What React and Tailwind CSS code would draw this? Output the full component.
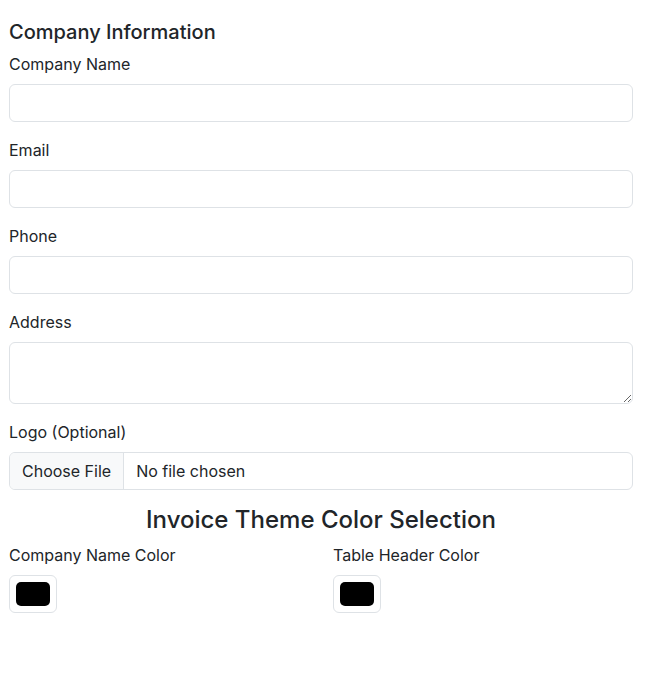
export default function App() {
  const field = 'block w-full h-[38px] rounded-[6px] border border-[#dee2e6] bg-white px-3 py-1.5 text-base outline-none';
  return (
    <div className="min-h-screen bg-white font-['Inter',sans-serif] text-[#212529]">
      <div className="w-[624px] ml-[9px] pt-[20px]">
        <h5 className="mb-2 text-[20px] font-medium leading-[1.2]">Company Information</h5>

        <div className="mb-4">
          <label className="mb-2 block text-base leading-6">Company Name</label>
          <input type="text" className={field} />
        </div>
        <div className="mb-4">
          <label className="mb-2 block text-base leading-6">Email</label>
          <input type="email" className={field} />
        </div>
        <div className="mb-4">
          <label className="mb-2 block text-base leading-6">Phone</label>
          <input type="text" className={field} />
        </div>
        <div className="mb-4">
          <label className="mb-2 block text-base leading-6">Address</label>
          <textarea
            rows={2}
            className="block h-[62px] w-full rounded-[6px] border border-[#dee2e6] bg-white px-3 py-1.5 text-base leading-6 outline-none"
          />
        </div>
        <div className="mb-4">
          <label className="mb-2 block text-base leading-6">Logo (Optional)</label>
          <div className="flex h-[38px] w-full overflow-hidden rounded-[6px] border border-[#dee2e6] bg-white text-base leading-6">
            <span className="flex items-center border-r border-[#dee2e6] bg-[#f8f9fa] px-3">Choose File</span>
            <span className="flex items-center pl-3">No file chosen</span>
          </div>
        </div>

        <h4 className="mb-2 text-center text-[24px] font-medium leading-[1.2]">Invoice Theme Color Selection</h4>

        <div className="-mx-3 flex">
          <div className="w-1/2 px-3">
            <label className="mb-2 block text-base leading-6">Company Name Color</label>
            <div className="h-[38px] w-12 rounded-[6px] border border-[#dee2e6] bg-white p-[6px]">
              <div className="h-full w-full rounded-[5px] bg-black" />
            </div>
          </div>
          <div className="w-1/2 px-3">
            <label className="mb-2 block text-base leading-6">Table Header Color</label>
            <div className="h-[38px] w-12 rounded-[6px] border border-[#dee2e6] bg-white p-[6px]">
              <div className="h-full w-full rounded-[5px] bg-black" />
            </div>
          </div>
        </div>
      </div>
    </div>
  );
}
